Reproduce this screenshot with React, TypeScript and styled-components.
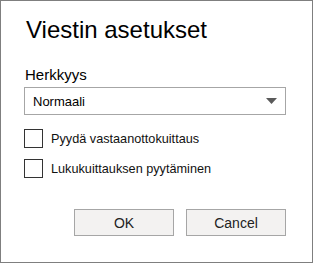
import React from "react";
import styled, { createGlobalStyle } from "styled-components";

const Global = createGlobalStyle`
  html, body { margin: 0; padding: 0; background: #fff; }
  * { box-sizing: border-box; }
`;

const Dialog = styled.div`
  width: 313px;
  height: 263px;
  border: 1px solid #7f7f7f;
  background: #fff;
  padding: 13px 26px 0 23px;
  display: flex;
  flex-direction: column;
  font-family: "Liberation Sans", Arial, sans-serif;
  color: #000;
`;

const Title = styled.h1`
  margin: 0;
  font-family: "Liberation Sans", Arial, sans-serif;
  font-weight: 400;
  font-size: 24px;
  line-height: 32px;
  padding-left: 2px;
`;

const FieldLabel = styled.label`
  margin-top: 20px;
  font-size: 15px;
  line-height: 18px;
  padding-left: 1px;
`;

const Select = styled.div`
  margin-top: 3px;
  height: 28px;
  border: 1px solid #a6a6a6;
  display: flex;
  align-items: center;
  justify-content: space-between;
  padding: 0 8px 0 8px;
  font-size: 13px;
`;

const Caret = styled.svg`
  width: 11px;
  height: 6px;
`;

const CheckList = styled.div`
  margin-top: 14px;
  display: flex;
  flex-direction: column;
  gap: 11px;
`;

const CheckRow = styled.label`
  display: flex;
  align-items: center;
  gap: 8px;
  font-size: 12.7px;
  color: #111;
`;

const Box = styled.span`
  width: 19px;
  height: 19px;
  border: 1px solid #333;
  flex: none;
`;

const Buttons = styled.div`
  margin-top: 31px;
  display: flex;
  justify-content: flex-end;
  gap: 12px;
`;

const Button = styled.button`
  width: 100px;
  height: 27px;
  background: #f3f2f1;
  border: 1px solid #a6a6a6;
  font-family: "Liberation Sans", Arial, sans-serif;
  font-size: 14px;
  color: #222;
  padding: 0;
`;

export default function App() {
  return (
    <>
      <Global />
      <Dialog>
        <Title>Viestin asetukset</Title>
        <FieldLabel>Herkkyys</FieldLabel>
        <Select>
          <span>Normaali</span>
          <Caret viewBox="0 0 11 6">
            <path d="M0 0 H11 L5.5 6 Z" fill="#5a5a5a" />
          </Caret>
        </Select>
        <CheckList>
          <CheckRow>
            <Box />
            Pyydä vastaanottokuittaus
          </CheckRow>
          <CheckRow>
            <Box />
            Lukukuittauksen pyytäminen
          </CheckRow>
        </CheckList>
        <Buttons>
          <Button>OK</Button>
          <Button>Cancel</Button>
        </Buttons>
      </Dialog>
    </>
  );
}
